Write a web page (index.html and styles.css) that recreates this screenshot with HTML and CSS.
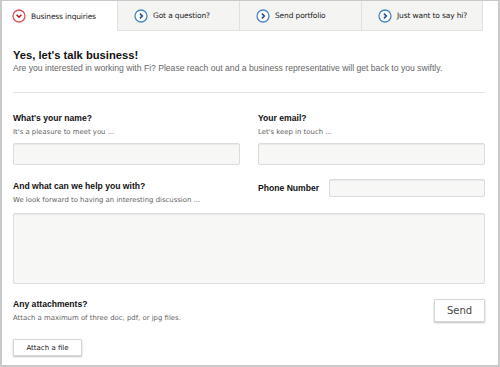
FILE: index.html
```html
<!DOCTYPE html>
<html lang="en">
<head>
    <meta charset="UTF-8">
    <title>Contact - Fi</title>
    <link rel="stylesheet" href="styles.css">
</head>
<body>
    <div class="panel">
        <!-- Tabs -->
        <nav class="tabs">
            <a class="tab active" href="#">
                <svg class="tab-icon" width="14" height="14" viewBox="0 0 14 14">
                    <circle cx="7" cy="7" r="6" fill="#fff" stroke="#e4505a" stroke-width="1.3"/>
                    <path d="M4.6 5.8 L7 8.2 L9.4 5.8" fill="none" stroke="#9a1f2a" stroke-width="1.6"/>
                </svg>
                Business inquiries
            </a>
            <a class="tab" href="#">
                <svg class="tab-icon" width="14" height="14" viewBox="0 0 14 14">
                    <circle cx="7" cy="7" r="6" fill="#fff" stroke="#4b86c4" stroke-width="1.3"/>
                    <path d="M5.9 4.6 L8.3 7 L5.9 9.4" fill="none" stroke="#1f4f8f" stroke-width="1.6"/>
                </svg>
                Got a question?
            </a>
            <a class="tab" href="#">
                <svg class="tab-icon" width="14" height="14" viewBox="0 0 14 14">
                    <circle cx="7" cy="7" r="6" fill="#fff" stroke="#4b86c4" stroke-width="1.3"/>
                    <path d="M5.9 4.6 L8.3 7 L5.9 9.4" fill="none" stroke="#1f4f8f" stroke-width="1.6"/>
                </svg>
                Send portfolio
            </a>
            <a class="tab last" href="#">
                <svg class="tab-icon" width="14" height="14" viewBox="0 0 14 14">
                    <circle cx="7" cy="7" r="6" fill="#fff" stroke="#4b86c4" stroke-width="1.3"/>
                    <path d="M5.9 4.6 L8.3 7 L5.9 9.4" fill="none" stroke="#1f4f8f" stroke-width="1.6"/>
                </svg>
                Just want to say hi?
            </a>
        </nav>

        <!-- Intro -->
        <header class="intro">
            <h1>Yes, let's talk business!</h1>
            <p>Are you interested in working with Fi? Please reach out and a business representative will get back to you swiftly.</p>
        </header>

        <!-- Form -->
        <form class="contact-form">
            <div class="row two-col">
                <div class="field">
                    <label>What's your name?</label>
                    <span class="hint">It's a pleasure to meet you ...</span>
                    <input type="text" class="input">
                </div>
                <div class="field">
                    <label>Your email?</label>
                    <span class="hint">Let's keep in touch ...</span>
                    <input type="text" class="input">
                </div>
            </div>

            <div class="row two-col help-row">
                <div class="field">
                    <label>And what can we help you with?</label>
                    <span class="hint">We look forward to having an interesting discussion ...</span>
                </div>
                <div class="phone">
                    <label>Phone Number</label>
                    <input type="text" class="input phone-input">
                </div>
            </div>
            <textarea class="input message"></textarea>

            <div class="row attach-row">
                <div class="field">
                    <label>Any attachments?</label>
                    <span class="hint">Attach a maximum of three doc, pdf, or jpg files.</span>
                    <button type="button" class="btn attach">Attach a file</button>
                </div>
                <button type="button" class="btn send">Send</button>
            </div>
        </form>
    </div>
</body>
</html>
```

FILE: styles.css
```css
/* Basic Reset */
* {
    margin: 0;
    padding: 0;
    box-sizing: border-box;
}

body {
    font-family: "Liberation Sans", Arial, sans-serif;
    background-color: white;
    color: #111;
}

.panel {
    width: 500px;
    height: 367px;
    border: 2px solid #c9c9c9;
    border-top-width: 1px;
    background: #fff;
}

/* Tabs */
.tabs {
    display: flex;
    height: 30px;
}

.tab {
    flex: none;
    display: flex;
    align-items: center;
    gap: 5px;
    width: 122px;
    padding-left: 16px;
    font-family: "DejaVu Sans", Verdana, sans-serif;
    font-size: 7.5px;
    letter-spacing: -0.15px;
    color: #222;
    text-decoration: none;
    background-color: #f4f4f3;
    border-left: 1px solid #e0e0e0;
    border-bottom: 1px solid #e0e0e0;
}

.tab.active {
    width: 115px;
    padding-left: 10px;
    background-color: #fff;
    border-left: none;
    border-bottom: none;
}

.tab.last {
    border-right: 1px solid #e0e0e0;
}

.tab-icon {
    flex-shrink: 0;
}

/* Intro */
.intro {
    margin: 0 13px 0 11px;
    padding: 17px 0 18px;
    border-bottom: 1px solid #e2e2e2;
}

.intro h1 {
    font-size: 11.2px;
    line-height: 14px;
    color: #111;
}

.intro p {
    font-size: 8.6px;
    line-height: 12px;
    color: #666;
}

/* Form */
.contact-form {
    padding: 20px 13px 0 11px;
}

.row {
    display: flex;
    justify-content: space-between;
}

.two-col .field {
    width: 227px;
}

.field {
    display: flex;
    flex-direction: column;
}

label {
    font-size: 8.6px;
    font-weight: bold;
    line-height: 11px;
    color: #111;
}

.hint {
    font-family: "DejaVu Sans", Verdana, sans-serif;
    font-size: 6.9px;
    line-height: 11px;
    margin-top: 3px;
    color: #5f5f5f;
}

.input {
    display: block;
    background-color: #f7f7f6;
    border: 1px solid #dcdcdc;
    border-radius: 2px;
    box-shadow: inset 0 1px 1px rgba(0, 0, 0, 0.06);
}

.field .input {
    height: 22px;
    margin-top: 5px;
}

.help-row {
    margin-top: 16px;
}

.phone {
    display: flex;
    align-items: center;
    width: 227px;
    height: 18px;
    margin-top: -2px;
}

.phone label {
    width: 71px;
}

.phone-input {
    width: 156px;
    height: 18px;
}

.message {
    width: 472px;
    height: 71px;
    margin-top: 7px;
    resize: none;
}

.attach-row {
    margin-top: 15px;
    align-items: flex-start;
}

.btn {
    background-color: #fff;
    border: 1px solid #d6d6d6;
    box-shadow: 0 1px 2px rgba(0, 0, 0, 0.25);
    border-radius: 1px;
    cursor: pointer;
}

.attach {
    width: 69px;
    height: 17px;
    margin-top: 15px;
    font-family: "DejaVu Sans", Verdana, sans-serif;
    font-size: 7px;
    color: #222;
}

.send {
    width: 51px;
    height: 23px;
    margin-top: 0;
    font-family: "DejaVu Sans", Verdana, sans-serif;
    font-size: 10px;
    color: #444;
}
```
